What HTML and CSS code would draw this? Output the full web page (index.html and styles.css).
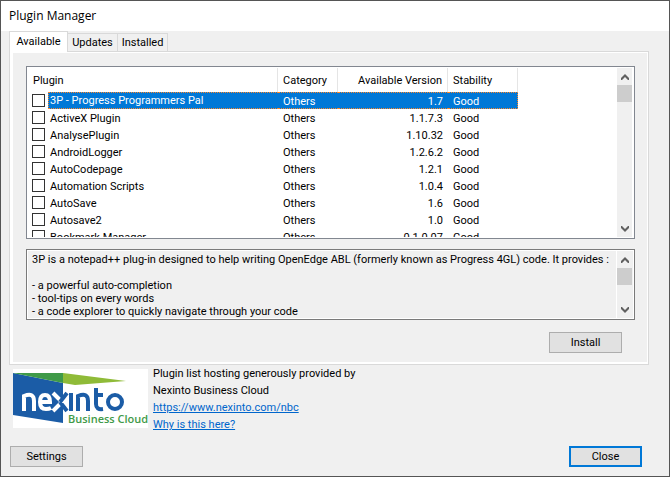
FILE: index.html
```html
<!DOCTYPE html>
<html lang="en">
<head>
  <meta charset="utf-8">
  <title>Plugin Manager</title>
  <link rel="stylesheet" href="styles.css">
</head>
<body>
  <div class="window">
    <h1 class="title-bar">Plugin Manager</h1>

    <div class="tabs" role="tablist">
      <button class="tab active" role="tab" aria-selected="true">Available</button>
      <button class="tab" role="tab" aria-selected="false">Updates</button>
      <button class="tab" role="tab" aria-selected="false">Installed</button>
    </div>

    <div class="panel" role="tabpanel">
      <div class="plugin-list">
        <div class="list-view">
          <table>
            <colgroup>
              <col class="col-plugin">
              <col class="col-category">
              <col class="col-version">
              <col class="col-stability">
            </colgroup>
            <thead>
              <tr><th>Plugin</th><th>Category</th><th class="version">Available Version</th><th>Stability</th></tr>
            </thead>
            <tbody>
              <tr class="selected"><td><label><input type="checkbox"><span>3P - Progress Programmers Pal</span></label></td><td>Others</td><td class="version">1.7</td><td>Good</td></tr>
              <tr><td><label><input type="checkbox"><span>ActiveX Plugin</span></label></td><td>Others</td><td class="version">1.1.7.3</td><td>Good</td></tr>
              <tr><td><label><input type="checkbox"><span>AnalysePlugin</span></label></td><td>Others</td><td class="version">1.10.32</td><td>Good</td></tr>
              <tr><td><label><input type="checkbox"><span>AndroidLogger</span></label></td><td>Others</td><td class="version">1.2.6.2</td><td>Good</td></tr>
              <tr><td><label><input type="checkbox"><span>AutoCodepage</span></label></td><td>Others</td><td class="version">1.2.1</td><td>Good</td></tr>
              <tr><td><label><input type="checkbox"><span>Automation Scripts</span></label></td><td>Others</td><td class="version">1.0.4</td><td>Good</td></tr>
              <tr><td><label><input type="checkbox"><span>AutoSave</span></label></td><td>Others</td><td class="version">1.6</td><td>Good</td></tr>
              <tr><td><label><input type="checkbox"><span>Autosave2</span></label></td><td>Others</td><td class="version">1.0</td><td>Good</td></tr>
              <tr><td><label><input type="checkbox"><span>Bookmark Manager</span></label></td><td>Others</td><td class="version">0.1.0.07</td><td>Good</td></tr>
            </tbody>
          </table>
        </div>
        <div class="scrollbar">
          <svg class="arrow" viewBox="0 0 15 17"><path d="M4 12v-2l4-4 4 4v2h-1L8 9l-3 3z"/></svg>
          <div class="thumb"></div>
          <svg class="arrow" viewBox="0 0 15 17"><path d="M4 6v2l4 4 4-4V6h-1L8 9 5 6z"/></svg>
        </div>
      </div>

      <div class="description">
        <textarea readonly wrap="off" aria-label="Plugin description">3P is a notepad++ plug-in designed to help writing OpenEdge ABL (formerly known as Progress 4GL) code. It provides :

- a powerful auto-completion
- tool-tips on every words
- a code explorer to quickly navigate through your code</textarea>
        <div class="scrollbar">
          <svg class="arrow" viewBox="0 0 15 17"><path d="M4 12v-2l4-4 4 4v2h-1L8 9l-3 3z"/></svg>
          <div class="thumb"></div>
          <svg class="arrow" viewBox="0 0 15 17"><path d="M4 6v2l4 4 4-4V6h-1L8 9 5 6z"/></svg>
        </div>
      </div>

      <div class="actions">
        <button class="button">Install</button>
      </div>
    </div>

    <div class="sponsor">
      <svg class="logo" viewBox="0 0 135 59" role="img" aria-label="nexinto Business Cloud">
        <rect width="135" height="59" fill="#fff"/>
        <path d="M0 4L50 14V54L0 46z" fill="#1b5ca6"/>
        <path d="M0 4H50V14z" fill="#3f9a48"/>
        <path d="M50 4L113 12 62 16 50 14z" fill="#8fbb38"/>
        <g fill="none" stroke-width="4">
          <path d="M11 42V27Q21 23 21 32V42M27 33H37Q37 26 32 26Q27 26 27 33Q27 40 33 40Q36 40 38 39M40 24L50 34M40 42L50 32" stroke="#fff"/>
          <path d="M47 33L54 24M47 33L54 42M58 24V42M65 42V27Q75 23 75 32V42M83 19V35Q83 41 90 40M81 26H90" stroke="#1b5ca6"/>
          <ellipse cx="102" cy="33" rx="7" ry="7" stroke="#1b5ca6"/>
        </g>
        <text class="logo-text" x="55" y="54">Business Cloud</text>
      </svg>
      <div class="sponsor-text">
        <p>Plugin list hosting generously provided by</p>
        <p>Nexinto Business Cloud</p>
        <a href="https://www.nexinto.com/nbc">https://www.nexinto.com/nbc</a>
        <a href="#">Why is this here?</a>
      </div>
    </div>

    <div class="footer">
      <button class="button">Settings</button>
      <button class="button default">Close</button>
    </div>
  </div>
</body>
</html>
```
FILE: styles.css
```css
* {
  box-sizing: border-box;
  margin: 0;
  padding: 0;
}

body {
  font-family: Roboto, sans-serif;
  font-size: 11px;
  line-height: 13px;
  color: #000;
}

button,
textarea {
  font: inherit;
  color: inherit;
}

.window {
  display: flex;
  flex-direction: column;
  height: 100vh;
  min-height: 420px;
  background: #f0f0f0;
  border: 1px solid #555;
}

.title-bar {
  padding: 7px 8px 8px;
  background: #fff;
  font: 12px/15px "Open Sans", sans-serif;
}

/* tabs */
.tabs {
  display: flex;
  align-items: flex-end;
  height: 20px;
  padding-left: 8px;
}

.tab {
  min-width: 50px;
  height: 18px;
  background: #f0f0f0;
  border: 1px solid #d9d9d9;
  border-left: 0;
  border-bottom: 0;
  white-space: nowrap;
}

.tab.active {
  z-index: 1;
  min-width: 59px;
  height: 21px;
  margin-bottom: -1px;
  padding-bottom: 2px;
  background: #fff;
  border-left: 1px solid #d9d9d9;
}

.panel {
  display: flex;
  flex: 1;
  flex-direction: column;
  min-height: 0;
  margin: 0 20px 0 8px;
  padding: 14px 10px 11px 13px;
  border: 1px solid #d9d9d9;
  box-shadow: inset 3px 0 #fff, inset 0 1px #fff, inset -1px -2px #fff;
}

.plugin-list {
  display: flex;
  flex: 1;
  min-height: 0;
  margin: 0 3px 10px;
  padding: 1px;
  background: #fff;
  border: 1px solid #828790;
}

.list-view {
  flex: 1;
  overflow: hidden;
}

table {
  width: 490px;
  table-layout: fixed;
  border-collapse: separate;
  border-spacing: 0;
}

.col-plugin { width: 250px; }
.col-category { width: 60px; }
.col-version { width: 110px; }
.col-stability { width: 70px; }

th {
  height: 24px;
  padding: 0 5px;
  border-right: 1px solid #e5e5e5;
  font-weight: normal;
  text-align: left;
  white-space: nowrap;
}

td {
  height: 17px;
  padding: 1px 5px 0;
}

td:first-child {
  padding: 0;
}

.version {
  text-align: right;
}

label {
  display: flex;
  align-items: center;
  height: 17px;
  padding-left: 4px;
}

label span {
  flex: 1;
  margin-left: 3px;
  padding: 2px 2px 0;
  line-height: 15px;
}

input[type="checkbox"] {
  appearance: none;
  width: 13px;
  height: 13px;
  background: #fff;
  border: 1px solid #333;
}

.selected td {
  background: #0078d7;
  border-top: 1px dotted #ff8728;
  border-bottom: 1px dotted #ff8728;
  color: #fff;
}

.selected td:first-child {
  background: #fff;
  border: 0;
}

.selected td:last-child {
  border-right: 1px dotted #ff8728;
}

.selected label span {
  padding: 1px 1px 0;
  background: #0078d7;
  border: 1px dotted #ff8728;
  border-right: 0;
  line-height: 14px;
}

/* scrollbars */
.scrollbar {
  display: flex;
  flex: 0 0 15px;
  flex-direction: column;
  margin-right: 1px;
  background: #f0f0f0;
}

.arrow {
  width: 15px;
  height: 17px;
  fill: #606060;
}

.thumb {
  height: 17px;
  margin-bottom: auto;
  background: #cdcdcd;
}

.description {
  display: flex;
  height: 71px;
  margin: 0 3px 12px;
  background: #f0f0f0;
  border: 1px solid #7a7a7a;
  box-shadow: inset 0 0 0 1px #fff;
  padding: 1px;
}

textarea {
  flex: 1;
  min-width: 0;
  padding: 2px 0 2px 4px;
  overflow: hidden;
  background: transparent;
  border: 0;
  border-right: 1px solid #fff;
  outline: 0;
  resize: none;
}

.actions {
  display: flex;
  justify-content: flex-end;
  padding-right: 16px;
}

.button {
  min-width: 73px;
  height: 21px;
  background: #e1e1e1;
  border: 1px solid #adadad;
}

.button.default {
  border: 2px solid #0078d7;
}

.sponsor {
  display: flex;
  gap: 5px;
  padding: 0 12px;
}

.logo {
  width: 135px;
  height: 59px;
  margin-top: 4px;
}

.logo-text {
  font: 600 11px "Open Sans", sans-serif;
  fill: #3f9a48;
}

.sponsor-text {
  display: flex;
  flex-direction: column;
  align-items: flex-start;
  line-height: 17px;
}

a {
  color: #0066cc;
}

.footer {
  display: flex;
  justify-content: space-between;
  padding: 13px 27px 9px 9px;
}
```
